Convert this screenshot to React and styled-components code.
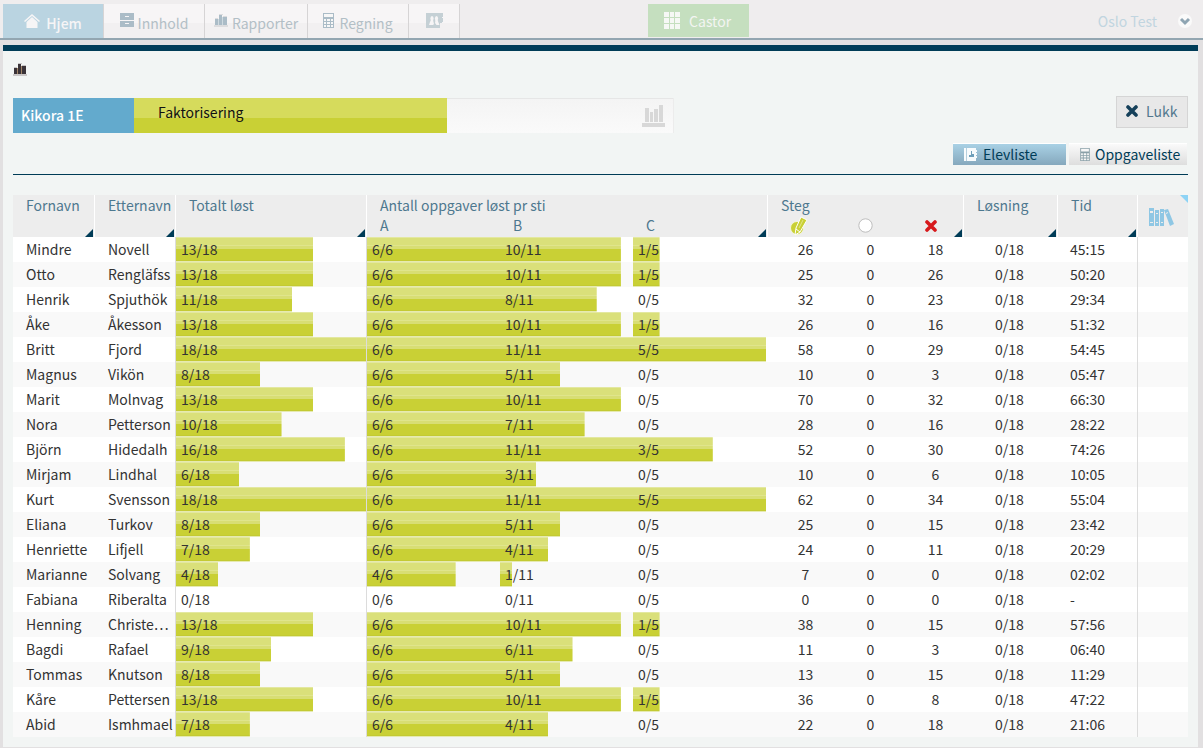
import React from 'react';
import styled, { createGlobalStyle, css } from 'styled-components';

const Global = createGlobalStyle`
  *, *::before, *::after { box-sizing: border-box; }
  html, body { margin: 0; }
  body {
    background: #e2e0e1;
    color: #333;
    font: 14px/20px "Noto Sans CJK JP", "Open Sans", sans-serif;
  }
  button { font: inherit; margin: 0; border: 0; padding: 0; cursor: pointer; }
  svg { display: block; flex: none; }
`;

const TopBar = styled.header`
  display: grid;
  grid-template-columns: 27fr 101px 19fr;
  align-items: start;
  height: 40px;
  padding: 4px 0 0 3px;
  background: #efedee;
  border-bottom: 2px solid #93a6b1;
`;

const Nav = styled.nav`
  display: flex;
  min-width: 0;
`;

const NavItem = styled.a`
  display: flex;
  align-items: center;
  justify-content: center;
  gap: ${p => p.$gap || 6}px;
  width: ${p => p.$width}px;
  height: 34px;
  padding-top: 3px;
  border-right: 1px solid #d6d4d5;
  background: linear-gradient(#f7f5f6 0 55%, #f2f0f1 55%);
  color: #b3bfc6;
  text-decoration: none;
  svg { margin-bottom: 4px; }
  ${p => p.$active && css`
    background: #bad4e1;
    color: #f6f5f6;
    font-weight: 500;
  `}
`;

const CastorButton = styled.button`
  display: flex;
  align-items: center;
  gap: 9px;
  width: 101px;
  height: 33px;
  padding-left: 16px;
  background: #c5dfbf;
  color: #f3f5f2;
`;

const Account = styled.div`
  display: flex;
  align-items: center;
  justify-content: flex-end;
  gap: 21px;
  height: 33px;
  padding-right: 11px;
  color: #c1d5e0;
`;

const RoundButton = styled.button`
  width: 14px;
  height: 14px;
  border-radius: 50%;
  background: #fafafa;
`;

const Panel = styled.main`
  margin: 5px 5px 0 3px;
  padding: 12px 10px 10px;
  border-top: 6px solid #003c57;
  background: #f2f5f4;
`;

const PageBottom = styled.div`
  height: 1px;
`;

const PanelIcon = styled.div`
  height: 35px;
`;

const TitleRow = styled.div`
  display: flex;
  justify-content: space-between;
  align-items: flex-start;
`;

const Progress = styled.div`
  display: flex;
  flex: 0 1 661px;
  height: 35px;
`;

const GroupName = styled.div`
  width: 121px;
  padding: 7px 8px 0;
  background: #63aacd;
  color: #fff;
  font-weight: 500;
`;

const Track = styled.div`
  display: flex;
  flex: 1;
  align-items: flex-start;
  justify-content: space-between;
  background: linear-gradient(#f4f4f4, #fafafa);
  border-right: 1px solid #ececec;
  box-shadow: inset 0 1px 0 #e6e6e6;
`;

const TrackFill = styled.div`
  width: 313px;
  height: 35px;
  padding: 4px 24px;
  background: linear-gradient(#d6db5c 0 20px, #c9d035 20px);
  color: #111;
`;

const TrackIcon = styled.div`
  padding: 7px 8px 0;
`;

const CloseButton = styled.button`
  display: flex;
  align-items: center;
  gap: 8px;
  width: 72px;
  height: 32px;
  margin-top: -2px;
  padding: 0 9px 3px;
  border: 1px solid #d5d5d5;
  background: #e8e8e8;
  color: #53788e;
`;

const Tabs = styled.div`
  display: flex;
  justify-content: flex-end;
  gap: 3px;
  height: 42px;
  padding: 10px 1px 0 0;
  border-bottom: 1px solid #003c57;
`;

const Tab = styled.button`
  display: flex;
  align-items: center;
  gap: ${p => (p.$active ? 6 : 5)}px;
  width: ${p => (p.$active ? 113 : 118)}px;
  height: 22px;
  padding: 0 10px 1px 11px;
  border-top: 1px solid #fff;
  background: ${p => (p.$active ? 'linear-gradient(#a9d1e5, #85a8bd)' : 'linear-gradient(#fafafa, #dedede)')};
  color: #003c57;
`;

const Grid = styled.table`
  width: 100%;
  margin-top: 20px;
  border-spacing: 0;
  table-layout: fixed;
`;

const Col = styled.col`
  width: ${p => p.$width};
`;

const Head = styled.th`
  position: relative;
  height: 42px;
  padding: ${p => (p.$icon ? '2px 0 0 11px' : '0 0 0 13px')};
  border-right: ${p => (p.$icon ? 0 : 1)}px solid #fff;
  background: #ededed;
  color: #4d788f;
  font-weight: 400;
  text-align: left;
  vertical-align: ${p => (p.$icon ? 'middle' : 'top')};
  white-space: nowrap;
  &::after {
    content: '';
    position: absolute;
    right: ${p => (p.$icon ? 0 : 1)}px;
    ${p => (p.$icon ? 'top: 0;' : 'bottom: 0;')}
    width: 8px;
    height: 8px;
    background: ${p => (p.$icon ? '#8dd3f5' : '#003c57')};
    clip-path: ${p => (p.$icon ? 'polygon(0 0, 100% 0, 100% 100%)' : 'polygon(100% 0, 100% 100%, 0 100%)')};
  }
`;

const PathLabels = styled.div`
  display: grid;
  grid-template-columns: 1fr 1fr 1fr;
  margin-right: -12px;
`;

const StepIcons = styled.div`
  display: grid;
  grid-template-columns: 68px 67px 67px;
  align-items: center;
  height: 21px;
  padding-left: 9px;
`;

const Row = styled.tr`
  background: ${p => (p.$odd ? '#f9f9f9' : '#fff')};
`;

const Cell = styled.td`
  height: 25px;
  padding: 0 0 ${p => (p.$bars ? 0 : 1)}px ${p => p.$pad || 0}px;
  border-right: ${p => (p.$line ? '1px solid #dcdcdc' : 0)};
  overflow: hidden;
  white-space: nowrap;
  text-overflow: ellipsis;
`;

const Bars = styled.div`
  display: grid;
  grid-template-columns: repeat(${p => p.$count}, 1fr);
  padding-right: ${p => (p.$count > 1 ? 2 : 0)}px;
`;

const Meter = styled.div`
  height: 25px;
  padding: 2px 0 0 5px;
  background: linear-gradient(#e3e8a0 0 1px, #dae07a 1px 8px, #e0e58c 8px 9px, #d8de74 9px 12px, #c9d035 12px 23px, #c3ca33 23px 24px, #e6eab0 24px) no-repeat;
`;

const Steps = styled.div`
  display: grid;
  grid-template-columns: 65px 65px 65px;
  padding-left: 5px;
  text-align: center;
`;

const HomeIcon = () => (
  <svg width="16" height="14" viewBox="0 0 16 14" fill="currentColor">
    <path d="M8 0 0 7l1 1 7-6 7 6 1-1z" /><path d="M8 3 2.5 8v6h11V8z" />
  </svg>
);
const DrawerIcon = () => (
  <svg width="14" height="15" viewBox="0 0 14 15">
    <path fill="#abbcc7" d="M0 0h14v7H0zM0 8h14v6H0z" /><path fill="#f7f5f6" d="M5 3h4v1H5zM5 10h4v1H5z" />
  </svg>
);
const BarsIcon = ({ color = '#abbcc7', gap = '#cfdae0', base = '#dcdcde' }) => (
  <svg width="14" height="13" viewBox="0 0 14 13">
    <path fill={base} d="M0 11h14v2H0zM5 0h4v1H5zM1 4h3v1H1zM9 2h4v1H9z" />
    <path fill={color} d="M1 5h3v6H1zM5 1h3v10H5zM9 3h4v8H9z" />
    <path fill={gap} d="M4 5h1v6H4zM8 3h1v8H8z" />
  </svg>
);
const CalcIcon = ({ width = 11, height = 15, color = '#abbcc7' }) => (
  <svg width={width} height={height} viewBox="0 0 11 15">
    <path fill={color} d="M0 0h11v15H0z" />
    <path fill="#f7f7f7" d="M1 1h9v3H1zM1 6h2v2H1zM4 6h3v2H4zM8 6h2v2H8zM1 9h2v2H1zM4 9h3v2H4zM8 9h2v2H8zM1 12h2v2H1zM4 12h3v2H4zM8 12h2v2H8z" />
  </svg>
);
const PeopleIcon = () => (
  <svg width="17" height="15" viewBox="0 0 17 15">
    <path fill="#c5d0d5" d="M0 0h17v4h-1v1h1v4h-1v1h-2v5H0z" />
    <g fill="#f7f5f6">
      <ellipse cx="6" cy="5.5" rx="1.6" ry="2.5" /><ellipse cx="10.5" cy="5.5" rx="1.6" ry="2.5" />
      <path d="M5 7h2l1 4-1 1H3l1-3zM9.500 7h2l2 5h-3L9 10z" />
    </g>
  </svg>
);
const TilesIcon = () => (
  <svg width="16" height="17" viewBox="0 0 16 17" fill="#f6f8f5">
    <path d="M0 0h5v5H0zM6 0h4v5H6zM11 0h5v5h-5zM0 6h5v5H0zM6 6h4v5H6zM11 6h5v5h-5zM0 12h5v5H0zM6 12h4v5H6zM11 12h5v5h-5z" />
  </svg>
);
const ChevronIcon = () => (
  <svg width="14" height="14" viewBox="0 0 14 14" fill="none" stroke="#8fa5b3" strokeWidth="3">
    <path d="m3 5 4 4 4-4" />
  </svg>
);
const ChartIcon = () => (
  <svg width="23" height="22" viewBox="0 0 23 22" fill="#d8d8d8">
    <path d="M3 3h4v14H3zM8 7h3v10H8zM12 4h4v13h-4zM17 0h4v17h-4zM0 18h23v4H0z" />
  </svg>
);
const CrossIcon = ({ color = '#15405a' }) => (
  <svg width="12" height="12" viewBox="0 0 12 12" stroke={color} strokeWidth="3.6" strokeLinecap="round">
    <path d="m2 2 8 8M10 2l-8 8" />
  </svg>
);
const ContactIcon = () => (
  <svg width="13" height="13" viewBox="0 0 13 13">
    <path fill="#f7fbfd" d="M0 0h12v2h1v2h-1v1h1v2h-1v1h1v2h-1v3H0z" />
    <path fill="#b5d0df" d="M2 0h1v13H2z" /><path fill="#6f9fba" d="M7 3h1v3h2v3H5V7h2z" />
  </svg>
);
const PencilIcon = () => (
  <svg width="18" height="20" viewBox="0 0 18 20">
    <circle cx="7" cy="12" r="6.5" fill="#c9d035" stroke="#f4f5dc" />
    <path d="m11 1 6 3-7 12-5 3 1-7z" fill="#c9d035" stroke="#fff" />
    <path d="m6 13 4 3" stroke="#fff" /><path d="M13 4 9 12" stroke="#e1e58a" />
  </svg>
);
const CircleIcon = () => (
  <svg width="15" height="15" viewBox="0 0 15 15">
    <circle cx="7.5" cy="7.5" r="6.7" fill="#fff" stroke="#bdbdbd" />
  </svg>
);
const BindersIcon = () => (
  <svg width="25" height="19" viewBox="0 0 25 19">
    <path fill="#8fc7e4" d="M0 0h5v18H0zM6 2h4v16H6zM11 1h4v17h-4zM15 2l4-1 6 15-4 2z" />
    <path fill="#ededed" d="M1 3h3v2H1zM1 14h3v1H1zM7 5h2v1H7zM7 14h2v1H7zM12 4h2v1h-2zM12 14h2v1h-2zM17 5l2-1v1l-2 1z" />
  </svg>
);

const students = [
  ['Mindre', 'Novell', 13, 6, 10, 1, 26, 18, '45:15'],
  ['Otto', 'Rengläfss', 13, 6, 10, 1, 25, 26, '50:20'],
  ['Henrik', 'Spjuthök', 11, 6, 8, 0, 32, 23, '29:34'],
  ['Åke', 'Åkesson', 13, 6, 10, 1, 26, 16, '51:32'],
  ['Britt', 'Fjord', 18, 6, 11, 5, 58, 29, '54:45'],
  ['Magnus', 'Vikön', 8, 6, 5, 0, 10, 3, '05:47'],
  ['Marit', 'Molnvag', 13, 6, 10, 0, 70, 32, '66:30'],
  ['Nora', 'Petterson', 10, 6, 7, 0, 28, 16, '28:22'],
  ['Björn', 'Hidedalh', 16, 6, 11, 3, 52, 30, '74:26'],
  ['Mirjam', 'Lindhal', 6, 6, 3, 0, 10, 6, '10:05'],
  ['Kurt', 'Svensson', 18, 6, 11, 5, 62, 34, '55:04'],
  ['Eliana', 'Turkov', 8, 6, 5, 0, 25, 15, '23:42'],
  ['Henriette', 'Lifjell', 7, 6, 4, 0, 24, 11, '20:29'],
  ['Marianne', 'Solvang', 4, 4, 1, 0, 7, 0, '02:02'],
  ['Fabiana', 'Riberalta', 0, 0, 0, 0, 0, 0, '-'],
  ['Henning', 'Christe…', 13, 6, 10, 1, 38, 15, '57:56'],
  ['Bagdi', 'Rafael', 9, 6, 6, 0, 11, 3, '06:40'],
  ['Tommas', 'Knutson', 8, 6, 5, 0, 13, 15, '11:29'],
  ['Kåre', 'Pettersen', 13, 6, 10, 1, 36, 8, '47:22'],
  ['Abid', 'Ismhmael', 7, 6, 4, 0, 22, 18, '21:06'],
];

const Score = ({ value, max }) => (
  <Meter style={{ backgroundSize: `${(value / max) * 100}% 100%` }}>{value}/{max}</Meter>
);

const columns = ['82px', '81px', '191px', 'auto', '196px', '94px', '80px', '50px'];

export default function App() {
  return (
    <>
      <Global />
      <TopBar>
        <Nav>
          <NavItem href="#hjem" $width={101} $active><HomeIcon />Hjem</NavItem>
          <NavItem href="#innhold" $width={101} $gap={4}><DrawerIcon />Innhold</NavItem>
          <NavItem href="#rapporter" $width={103} $gap={4}><BarsIcon />Rapporter</NavItem>
          <NavItem href="#regning" $width={101} $gap={5}><CalcIcon />Regning</NavItem>
          <NavItem href="#klasse" $width={51} aria-label="Klasse"><PeopleIcon /></NavItem>
        </Nav>
        <CastorButton><TilesIcon />Castor</CastorButton>
        <Account>Oslo Test<RoundButton aria-label="Meny"><ChevronIcon /></RoundButton></Account>
      </TopBar>
      <Panel>
        <PanelIcon><BarsIcon color="#3a3338" gap="#a08468" base="#c9c6c6" /></PanelIcon>
        <TitleRow>
          <Progress>
            <GroupName>Kikora 1E</GroupName>
            <Track>
              <TrackFill>Faktorisering</TrackFill>
              <TrackIcon><ChartIcon /></TrackIcon>
            </Track>
          </Progress>
          <CloseButton><CrossIcon />Lukk</CloseButton>
        </TitleRow>
        <Tabs>
          <Tab $active><ContactIcon />Elevliste</Tab>
          <Tab><CalcIcon width={10} height={13} color="#8aa0a8" />Oppgaveliste</Tab>
        </Tabs>
        <Grid>
          <colgroup>{columns.map((w, i) => <Col key={i} $width={w} />)}</colgroup>
          <thead>
            <tr>
              <Head>Fornavn</Head>
              <Head>Etternavn</Head>
              <Head>Totalt løst</Head>
              <Head>
                Antall oppgaver løst pr sti
                <PathLabels><span>A</span><span>B</span><span>C</span></PathLabels>
              </Head>
              <Head>
                Steg
                <StepIcons><PencilIcon /><CircleIcon /><CrossIcon color="#d7191c" /></StepIcons>
              </Head>
              <Head>Løsning</Head>
              <Head>Tid</Head>
              <Head $icon aria-label="Permer"><BindersIcon /></Head>
            </tr>
          </thead>
          <tbody>
            {students.map(([first, last, total, a, b, c, steps, wrong, time], i) => (
              <Row key={first} $odd={i % 2 === 1}>
                <Cell $pad={13}>{first}</Cell>
                <Cell $pad={13} $line>{last}</Cell>
                <Cell $line $bars><Bars $count={1}><Score value={total} max={18} /></Bars></Cell>
                <Cell $bars>
                  <Bars $count={3}>
                    <Score value={a} max={6} />
                    <Score value={b} max={11} />
                    <Score value={c} max={5} />
                  </Bars>
                </Cell>
                <Cell><Steps><span>{steps}</span><span>0</span><span>{wrong}</span></Steps></Cell>
                <Cell $pad={31}>0/18</Cell>
                <Cell $pad={12} $line>{time}</Cell>
                <Cell />
              </Row>
            ))}
          </tbody>
        </Grid>
      </Panel>
      <PageBottom />
    </>
  );
}
